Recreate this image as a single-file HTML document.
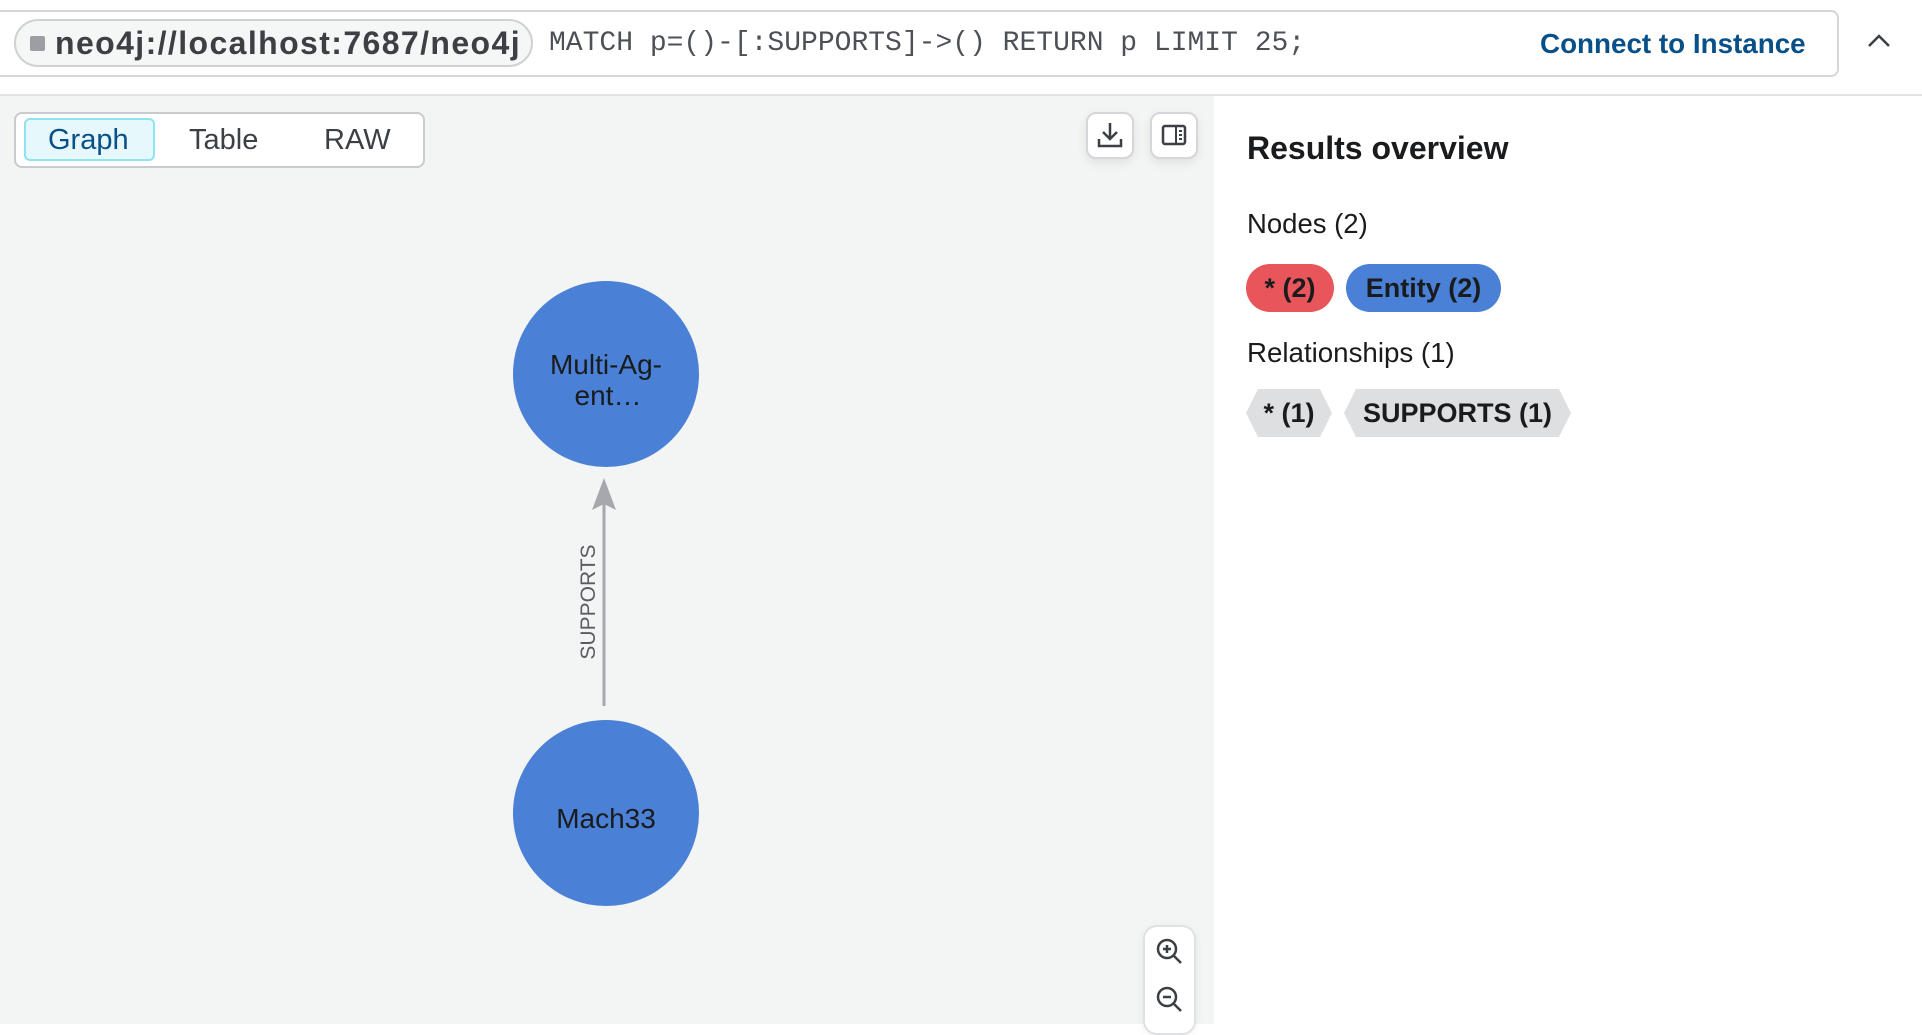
<!DOCTYPE html>
<html><head><meta charset="utf-8"><style>
*{box-sizing:border-box;margin:0;padding:0}
body{width:1922px;height:1024px;overflow:hidden;background:#fff;font-family:"Liberation Sans",sans-serif;color:#1a1b1d;position:relative}
.abs{position:absolute}
</style></head><body>
<div class="abs" style="left:-2px;top:10px;width:1841px;height:67px;border:2px solid #d4d6d9;border-radius:0 8px 8px 0;background:#fff"></div>
<div class="abs" style="left:14px;top:19px;width:519px;height:48px;border:2px solid #cfd1d4;border-radius:24px;background:#f5f6f6"></div>
<div class="abs" style="left:30px;top:36px;width:15px;height:15px;background:#9b9ea3;border-radius:2px"></div>
<div class="abs" style="left:55px;top:23px;font-size:32px;font-weight:bold;color:#3c3f44;line-height:40px;letter-spacing:1.4px">neo4j://localhost:7687/neo4j</div>
<div class="abs" style="left:549px;top:26px;font-family:'Liberation Mono',monospace;font-size:28px;color:#4d5157;line-height:36px">MATCH p=()-[:SUPPORTS]-&gt;() RETURN p LIMIT 25;</div>
<div class="abs" style="left:1540px;top:26px;font-size:27.8px;font-weight:bold;color:#0a5088;line-height:36px">Connect to Instance</div>
<svg class="abs" style="left:1866px;top:32px" width="26" height="18"><path d="M3 14 L13 4 L23 14" fill="none" stroke="#3c3f44" stroke-width="2.5"/></svg>
<div class="abs" style="left:0;top:94px;width:1922px;height:2px;background:#e2e3e5"></div>
<div class="abs" style="left:0;top:96px;width:1214px;height:928px;background:#f3f4f4"></div>
<div class="abs" style="left:14px;top:112px;width:411px;height:56px;border:2px solid #c9cbcf;border-radius:8px;background:#fff"></div>
<div class="abs" style="left:24px;top:118px;width:131px;height:43px;border:2px solid #8de4f0;border-radius:6px;background:#e6f8fb"></div>
<div class="abs" style="left:48px;top:122px;font-size:29px;color:#0a5088;line-height:36px">Graph</div>
<div class="abs" style="left:189px;top:122px;font-size:29px;color:#3c3f44;line-height:36px">Table</div>
<div class="abs" style="left:324px;top:122px;font-size:29px;color:#3c3f44;line-height:36px">RAW</div>
<div class="abs" style="left:1086px;top:112px;width:48px;height:47px;border:2px solid #d4d6d9;border-radius:10px;background:#fff;box-shadow:0 4px 10px rgba(0,0,0,.08)"></div>
<svg class="abs" style="left:1096px;top:120px" width="28" height="30"><path d="M14 3 V19 M7 12 L14 19 L21 12 M3 19 V26 H25 V19" fill="none" stroke="#3c3f44" stroke-width="2.5"/></svg>
<div class="abs" style="left:1150px;top:112px;width:48px;height:47px;border:2px solid #d4d6d9;border-radius:10px;background:#fff;box-shadow:0 4px 10px rgba(0,0,0,.08)"></div>
<svg class="abs" style="left:1161px;top:124px" width="26" height="22"><rect x="2" y="2" width="22" height="18" rx="2" fill="none" stroke="#3c3f44" stroke-width="2.5"/><path d="M15 2 V20 M18 7 H21 M18 11 H21 M18 15 H21" stroke="#3c3f44" stroke-width="2"/></svg>
<div class="abs" style="left:1247px;top:128px;font-size:32px;font-weight:bold;line-height:40px">Results overview</div>
<div class="abs" style="left:1247px;top:207px;font-size:27.5px;line-height:34px">Nodes (2)</div>
<div class="abs" style="left:1246px;top:264px;width:88px;height:48px;border-radius:24px;background:#e8565c;font-size:27px;font-weight:bold;line-height:48px;text-align:center">* (2)</div>
<div class="abs" style="left:1346px;top:264px;width:155px;height:48px;border-radius:24px;background:#4a80d5;font-size:27px;font-weight:bold;line-height:48px;text-align:center">Entity (2)</div>
<div class="abs" style="left:1247px;top:336px;font-size:27.7px;line-height:34px">Relationships (1)</div>
<div class="abs" style="left:1246px;top:389px;width:86px;height:48px;background:#dedfe1;clip-path:polygon(12px 0,calc(100% - 12px) 0,100% 50%,calc(100% - 12px) 100%,12px 100%,0 50%);font-size:27px;font-weight:bold;line-height:48px;text-align:center">* (1)</div>
<div class="abs" style="left:1344px;top:389px;width:227px;height:48px;background:#dedfe1;clip-path:polygon(12px 0,calc(100% - 12px) 0,100% 50%,calc(100% - 12px) 100%,12px 100%,0 50%);font-size:27px;font-weight:bold;line-height:48px;text-align:center">SUPPORTS (1)</div>
<svg class="abs" style="left:0;top:0" width="1214" height="1024">
<circle cx="606" cy="374" r="93" fill="#4a80d5"/>
<circle cx="606" cy="813" r="93" fill="#4a80d5"/>
<line x1="604" y1="706" x2="604" y2="500" stroke="#a5a8ad" stroke-width="3"/>
<path d="M604 478 L592 510 L604 504 L616 510 Z" fill="#a5a8ad"/>
<text x="606" y="374" font-family="Liberation Sans" font-size="28" text-anchor="middle" fill="#1a1b1d">Multi-Ag-</text>
<text x="608" y="405" font-family="Liberation Sans" font-size="28" text-anchor="middle" fill="#1a1b1d">ent…</text>
<text x="606" y="828" font-family="Liberation Sans" font-size="28" text-anchor="middle" fill="#1a1b1d">Mach33</text>
<text transform="translate(595,602) rotate(-90)" font-family="Liberation Sans" font-size="21" text-anchor="middle" fill="#5a5e63">SUPPORTS</text>
</svg>
<div class="abs" style="left:1143px;top:925px;width:53px;height:110px;border:2px solid #e0e1e3;border-radius:14px;background:#fff;box-shadow:0 2px 8px rgba(0,0,0,.06)"></div>
<svg class="abs" style="left:1154px;top:936px" width="32" height="80"><g fill="none" stroke="#3c3f44" stroke-width="2.5"><circle cx="13" cy="13" r="9"/><path d="M20 20 L27 27 M13 9 V17 M9 13 H17"/><circle cx="13" cy="61" r="9"/><path d="M20 68 L27 75 M9 61 H17"/></g></svg>
</body></html>
